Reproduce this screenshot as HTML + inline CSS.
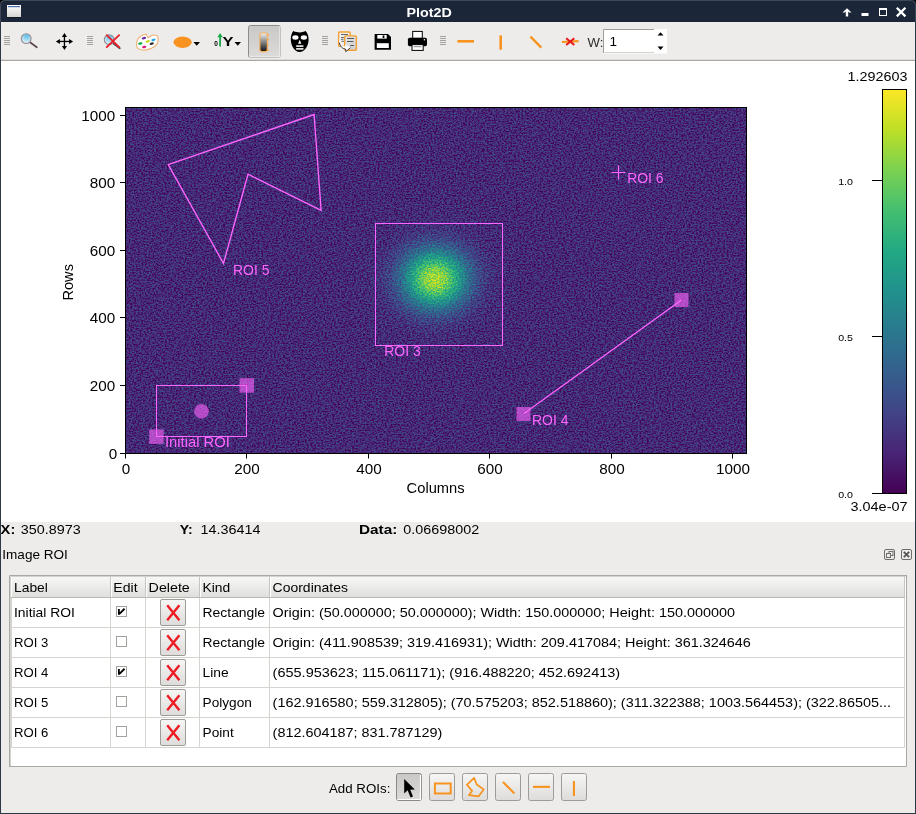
<!DOCTYPE html>
<html><head><meta charset="utf-8">
<style>
*{margin:0;padding:0;box-sizing:border-box}
html,body{width:916px;height:814px;overflow:hidden;background:#2a3444}
body{position:relative;font-family:"Liberation Sans",sans-serif;color:#000}
svg{position:absolute;left:0;top:0;will-change:transform}
text{font-family:"Liberation Sans",sans-serif}
</style></head><body>
<svg width="916" height="814" viewBox="0 0 916 814">
<defs>
<linearGradient id="btnPressed" x1="0" y1="0" x2="0" y2="1"><stop offset="0" stop-color="#c9c8c6"/><stop offset="1" stop-color="#dcdbd9"/></linearGradient>
<linearGradient id="btnN" x1="0" y1="0" x2="0" y2="1"><stop offset="0" stop-color="#f6f6f5"/><stop offset="1" stop-color="#dddcda"/></linearGradient>
<linearGradient id="hdr" x1="0" y1="0" x2="0" y2="1"><stop offset="0" stop-color="#f7f7f6"/><stop offset="1" stop-color="#dfdfdc"/></linearGradient>
<linearGradient id="cbar" x1="0" y1="1" x2="0" y2="0">
<stop offset="0" stop-color="#440154"/><stop offset="0.1" stop-color="#482475"/><stop offset="0.2" stop-color="#414487"/><stop offset="0.3" stop-color="#355f8d"/><stop offset="0.4" stop-color="#2a788e"/><stop offset="0.5" stop-color="#21918c"/><stop offset="0.6" stop-color="#22a884"/><stop offset="0.7" stop-color="#44bf70"/><stop offset="0.8" stop-color="#7ad151"/><stop offset="0.9" stop-color="#bddf26"/><stop offset="1" stop-color="#fde725"/>
</linearGradient>
<linearGradient id="cmapIcon" x1="0" y1="0" x2="0" y2="1"><stop offset="0" stop-color="#ffffff"/><stop offset="1" stop-color="#1a1a1a"/></linearGradient>
</defs>

<!-- window frame -->
<rect x="0" y="0" width="916" height="814" fill="#000"/>
<path d="M0 5 Q0 0 5 0 H911 Q916 0 916 5 V814 H0 Z" fill="#3e4856"/>
<path d="M1 5.5 Q1 1 5.5 1 H910.5 Q915 1 915 5.5 V22 H1 Z" fill="#1b2638"/>
<rect x="1" y="22" width="914" height="791" fill="#edeceb"/>
<defs><linearGradient id="wico" x1="0" y1="0" x2="0" y2="1"><stop offset="0" stop-color="#ffffff"/><stop offset="1" stop-color="#d6d6d2"/></linearGradient></defs>
<rect x="7" y="5" width="14" height="12" fill="url(#wico)"/>
<rect x="7" y="17" width="14" height="1" fill="#101820"/>
<rect x="8" y="6" width="12" height="1.2" fill="#4a70b0"/>
<text x="406.50" y="17.00" font-size="12.72" textLength="45.20" lengthAdjust="spacingAndGlyphs" font-weight="bold" fill="#fff">Plot2D</text>

<path d="M842.5 12.6 L847 8.2 L851.5 12.6 L849.2 12.6 L848.2 11.6 V16.5 H845.8 V11.6 L844.8 12.6 Z" fill="#fff"/>
<rect x="861.5" y="13" width="7" height="3" fill="#fff"/>
<path d="M879 8 H887 V16 H879 Z M880 10 V15 H886 V10 Z" fill="#fff" fill-rule="evenodd"/>
<path d="M896.8 7.8 L905.4 16.4 M905.4 7.8 L896.8 16.4" stroke="#fff" stroke-width="2.3"/>
<!-- toolbar -->
<rect x="1" y="59" width="914" height="1" fill="#dcdbd7"/>
<rect x="1" y="60" width="914" height="1" fill="#a9a8a2"/>

<g id="handles" fill="#a3a29c">
<path d="M4 36h6v1h-6zM4 38h6v1h-6zM4 40h6v1h-6zM4 42h6v1h-6zM4 44h6v1h-6z"/>
<path d="M87 36h6v1h-6zM87 38h6v1h-6zM87 40h6v1h-6zM87 42h6v1h-6zM87 44h6v1h-6z"/>
<path d="M322 36h6v1h-6zM322 38h6v1h-6zM322 40h6v1h-6zM322 42h6v1h-6zM322 44h6v1h-6z"/>
<path d="M440 36h6v1h-6zM440 38h6v1h-6zM440 40h6v1h-6zM440 42h6v1h-6zM440 44h6v1h-6z"/>
</g>
<defs>
<radialGradient id="lens" cx="0.55" cy="0.2" r="0.85"><stop offset="0" stop-color="#58bde8"/><stop offset="1" stop-color="#f4f8fa"/></radialGradient>
</defs>
<!-- zoom -->
<line x1="30" y1="42.3" x2="36.8" y2="47.2" stroke="#5c4b53" stroke-width="1.8" stroke-linecap="round"/>
<circle cx="26.2" cy="38.6" r="4.9" fill="url(#lens)" stroke="#958a8e" stroke-width="1.1"/>
<!-- pan -->
<g fill="#000">
<rect x="58" y="40.8" width="13" height="1.3"/>
<rect x="63.8" y="35" width="1.3" height="13"/>
<path d="M55.9 41.45 L59.9 38.9 L59.9 44 Z M73.1 41.45 L69.1 38.9 L69.1 44 Z M64.45 32.9 L61.9 36.9 L67 36.9 Z M64.45 50 L61.9 46 L67 46 Z"/>
</g>
<!-- zoom reset -->
<line x1="113" y1="43.3" x2="119.8" y2="48.2" stroke="#5c4b53" stroke-width="1.8" stroke-linecap="round"/>
<circle cx="109.2" cy="39.6" r="4.9" fill="url(#lens)" stroke="#958a8e" stroke-width="1.1"/>
<path d="M106.2 34.6 L119.6 47.6 M119.6 34.6 L106.2 47.6" stroke="#e8202a" stroke-width="1.9"/>
<!-- palette -->
<path d="M148 37.5 C146 35.5 147 33.6 145 34.2 C139 35.5 135.5 41 136.6 46 C137.6 50.6 145 51 151 48.6 C157 46.2 159.5 40.5 157.6 36.6 C156.5 34.5 153 34.6 151 35.8 C149.6 36.6 149 38.3 148 37.5 Z" fill="#fff" stroke="#f0b070" stroke-width="1.1"/>
<g transform="translate(0,0)">
<ellipse cx="143.9" cy="38.2" rx="2.2" ry="1.2" fill="#6a2aa8" transform="rotate(-15 143.9 38.2)"/>
<ellipse cx="153.4" cy="39.8" rx="2.2" ry="1.2" fill="#20a8e8" transform="rotate(-15 153.4 39.8)"/>
<ellipse cx="147.8" cy="41.4" rx="2.2" ry="1.2" fill="#c8d820" transform="rotate(-15 147.8 41.4)"/>
<ellipse cx="140.3" cy="43.5" rx="2.2" ry="1.2" fill="#10a840" transform="rotate(-15 140.3 43.5)"/>
<ellipse cx="151.7" cy="43.7" rx="2.2" ry="1.2" fill="#303030" transform="rotate(-15 151.7 43.7)"/>
<ellipse cx="144.2" cy="47" rx="2.2" ry="1.2" fill="#e81878" transform="rotate(-15 144.2 47)"/>
</g>
<!-- orange ellipse + arrow -->
<ellipse cx="182.6" cy="42.3" rx="9.1" ry="5.7" fill="#f7931e"/>
<path d="M193.5 42 H200 L196.75 45.8 Z" fill="#000"/>
<!-- Y axis -->
<text x="214.3" y="46" font-size="6.5" font-weight="bold" fill="#000">0</text>
<rect x="219.2" y="36" width="1.8" height="10.5" fill="#1aa84a"/>
<path d="M220.1 33 L217.4 37.2 L222.8 37.2 Z" fill="#1aa84a"/>
<text x="222.4" y="46.3" font-size="12.6" font-weight="bold" fill="#000" textLength="11" lengthAdjust="spacingAndGlyphs">Y</text>
<path d="M234.5 42 H241 L237.75 45.8 Z" fill="#000"/>
<!-- pressed button -->
<rect x="248.5" y="25.5" width="32" height="32" rx="2" fill="url(#btnPressed)" stroke="#8f8d89" stroke-width="1"/>
<path d="M249.5 57 H280 V26" stroke="#f6f6f4" stroke-width="1" fill="none"/>
<defs><linearGradient id="cmi" x1="0" y1="0" x2="0" y2="1"><stop offset="0" stop-color="#f2f2f2"/><stop offset="1" stop-color="#101010"/></linearGradient></defs>
<g fill="#f5a848"><rect x="266.5" y="34.2" width="2.6" height="1.2"/><rect x="266.5" y="39" width="2.6" height="1.2"/><rect x="266.5" y="44.5" width="2.6" height="1.2"/><rect x="266.5" y="49.8" width="2.6" height="1.2"/></g>
<rect x="259.9" y="33" width="7.4" height="18.6" rx="2" fill="url(#cmi)" stroke="#f5ad55" stroke-width="1.1"/>
<!-- mask -->
<path d="M293.3 31 C295.5 32 297.5 32.4 299.7 32.4 C301.9 32.4 303.9 32 305.6 31.1 C307.6 33 308.7 36.5 308.6 40 C308.4 46 304.6 51.9 299.7 51.9 C294.8 51.9 291 46 290.8 40 C290.7 36.5 291.5 33 293.3 31 Z" fill="#000"/>
<ellipse cx="295.4" cy="37.5" rx="3.1" ry="2.2" fill="#fff"/>
<ellipse cx="303.9" cy="37.5" rx="3.1" ry="2.2" fill="#fff"/>
<path d="M299.7 39.7 L298.1 43.8 H301.3 Z" fill="#fff"/>
<rect x="295.9" y="45.2" width="7.8" height="1.7" rx="0.8" fill="#e0e0e0"/>
<rect x="295.9" y="48" width="7.8" height="1.7" rx="0.8" fill="#e0e0e0"/>
<!-- copy -->
<defs><linearGradient id="doc2" x1="0" y1="0" x2="1" y2="1"><stop offset="0" stop-color="#e6e6e6"/><stop offset="1" stop-color="#cfcfcf"/></linearGradient></defs>
<rect x="338.6" y="32" width="11.6" height="14.3" rx="1" fill="#f0f0f0" stroke="#f5a030" stroke-width="1.4"/>
<g fill="#666"><rect x="341" y="34" width="7" height="1"/><rect x="341" y="37" width="3.5" height="1"/><rect x="341" y="38.8" width="2.5" height="1"/><rect x="341.5" y="40.8" width="2.5" height="1"/></g>
<rect x="344.7" y="35.9" width="11.7" height="14.3" rx="1" fill="url(#doc2)" stroke="#f5a030" stroke-width="1.4"/>
<g fill="#555"><rect x="347" y="38" width="7" height="1"/><rect x="347" y="41" width="6.3" height="1"/><rect x="350.2" y="45" width="3.8" height="1"/></g>
<path d="M338.9 37 C339.2 43 341.5 46.2 345.4 46.6 L345.2 44.6 L350.8 47.4 L345.8 51.6 L345.6 49.2 C341.2 48.7 338.6 45.2 338.9 37 Z" fill="#fff"/>
<path d="M339.2 42.5 C340 46.2 342 48.6 345.6 49.2 L345.8 51.6 L350.6 47.6" fill="none" stroke="#111" stroke-width="0.8"/>
<!-- save -->
<path d="M374.6 34 H388 L391 37 V49.8 H374.6 Z" fill="#000"/>
<rect x="377.3" y="35" width="9.4" height="3.6" fill="#fff"/>
<rect x="382.6" y="35.4" width="1.8" height="2.6" fill="#000"/>
<rect x="376.8" y="43.2" width="12" height="4.8" fill="#fff"/>
<!-- print -->
<rect x="412.7" y="31.4" width="9.6" height="7" fill="#fff" stroke="#000" stroke-width="1"/>
<rect x="407.9" y="37.8" width="19.1" height="8.4" rx="1.8" fill="#000"/>
<circle cx="424.4" cy="39.8" r="0.8" fill="#fff"/>
<rect x="412" y="44.6" width="11.2" height="5.8" fill="#fff" stroke="#000" stroke-width="1"/>
<rect x="413.6" y="46.2" width="8" height="1" fill="#888"/>
<!-- line icons -->
<rect x="457.4" y="40" width="16.6" height="2.6" fill="#f7931e"/>
<rect x="499.4" y="35.4" width="2.6" height="14.3" fill="#f7931e"/>
<line x1="530.5" y1="36.6" x2="541.3" y2="47.6" stroke="#f7931e" stroke-width="2.3"/>
<line x1="562" y1="42" x2="578.6" y2="41.2" stroke="#f7931e" stroke-width="2.2"/>
<path d="M566.2 38.2 L574.3 45 M574.3 38.2 L566.2 45" stroke="#e81818" stroke-width="2"/>
<!-- W: spinbox -->
<text x="587.50" y="46.50" font-size="12.72" textLength="15.81" lengthAdjust="spacingAndGlyphs" fill="#2a2a2a">W:</text>

<rect x="603.5" y="29" width="63.5" height="24.5" fill="#fff"/>
<path d="M603.5 53 V29.5 H654" stroke="#9e9d98" stroke-width="1" fill="none"/>
<path d="M604.5 52.5 H654" stroke="#d4d3cf" stroke-width="1"/>
<text x="609.5" y="46.2" font-size="13.5" fill="#000">1</text>
<path d="M657.5 35.6 H663.5 L660.5 32.2 Z M657.5 46.6 H663.5 L660.5 50 Z" fill="#000"/>


<!-- PLOT -->
<rect x="1" y="61" width="914" height="461" fill="#fff"/>
<defs>
<radialGradient id="gauss" gradientUnits="userSpaceOnUse" cx="0" cy="0" r="80" gradientTransform="translate(435 279) scale(1.1 1)">
<stop offset="0" stop-color="#fff"/><stop offset="0.125" stop-color="#e1e1e1"/><stop offset="0.25" stop-color="#9b9b9b"/><stop offset="0.375" stop-color="#535353"/><stop offset="0.5" stop-color="#232323"/><stop offset="0.625" stop-color="#0b0b0b"/><stop offset="0.75" stop-color="#030303"/><stop offset="1" stop-color="#000"/>
</radialGradient>
<filter id="cmap" x="126" y="108" width="620" height="345" filterUnits="userSpaceOnUse" color-interpolation-filters="sRGB">
<feTurbulence type="fractalNoise" baseFrequency="0.55 0.7" numOctaves="2" seed="5" result="t"/>
<feColorMatrix in="t" type="matrix" values="2.5 0 0 0 -0.75  2.5 0 0 0 -0.75  2.5 0 0 0 -0.75  0 0 0 0 1" result="n"/>
<feComposite in="SourceGraphic" in2="n" operator="arithmetic" k1="0" k2="0.774" k3="0.232" k4="0" result="v"/>
<feColorMatrix in="v" type="matrix" values="1 0 0 0 0  0 1 0 0 0  0 0 1 0 0  0 0 0 0 1" result="v2"/>
<feComponentTransfer in="v2">
<feFuncR type="table" tableValues="0.267 0.282 0.255 0.208 0.165 0.129 0.133 0.267 0.478 0.741 0.992"/>
<feFuncG type="table" tableValues="0.004 0.141 0.267 0.373 0.471 0.569 0.659 0.749 0.820 0.875 0.906"/>
<feFuncB type="table" tableValues="0.329 0.459 0.529 0.553 0.557 0.549 0.518 0.439 0.318 0.149 0.145"/>
</feComponentTransfer>
</filter>
</defs>
<rect x="126" y="108" width="620" height="345" fill="url(#gauss)" filter="url(#cmap)"/>
<rect x="125.5" y="107.5" width="621" height="346" fill="none" stroke="#000" stroke-width="1"/>
<!-- ticks -->
<g stroke="#000" stroke-width="1">
<path d="M120 453.5H125M120 385.5H125M120 317.5H125M120 250.5H125M120 182.5H125M120 115.5H125"/>
<path d="M125.5 454V458.5M246.5 454V458.5M368.5 454V458.5M489.5 454V458.5M611.5 454V458.5M732.5 454V458.5"/>
</g>
<text x="108.82" y="458.50" font-size="14.13" textLength="8.48" lengthAdjust="spacingAndGlyphs">0</text>
<text x="89.85" y="390.50" font-size="14.13" textLength="25.45" lengthAdjust="spacingAndGlyphs">200</text>
<text x="89.85" y="323.00" font-size="14.13" textLength="25.45" lengthAdjust="spacingAndGlyphs">400</text>
<text x="89.85" y="255.50" font-size="14.13" textLength="25.45" lengthAdjust="spacingAndGlyphs">600</text>
<text x="89.85" y="187.50" font-size="14.13" textLength="25.45" lengthAdjust="spacingAndGlyphs">800</text>
<text x="81.36" y="120.50" font-size="14.13" textLength="33.94" lengthAdjust="spacingAndGlyphs">1000</text>
<text x="121.76" y="474.00" font-size="14.13" textLength="8.48" lengthAdjust="spacingAndGlyphs">0</text>
<text x="234.27" y="474.00" font-size="14.13" textLength="25.45" lengthAdjust="spacingAndGlyphs">200</text>
<text x="356.27" y="474.00" font-size="14.13" textLength="25.45" lengthAdjust="spacingAndGlyphs">400</text>
<text x="477.27" y="474.00" font-size="14.13" textLength="25.45" lengthAdjust="spacingAndGlyphs">600</text>
<text x="599.27" y="474.00" font-size="14.13" textLength="25.45" lengthAdjust="spacingAndGlyphs">800</text>
<text x="716.03" y="474.00" font-size="14.13" textLength="33.94" lengthAdjust="spacingAndGlyphs">1000</text>
<text x="406.60" y="493.00" font-size="14.13" textLength="58.00" lengthAdjust="spacingAndGlyphs">Columns</text>
<text transform="translate(72.5 282.3) rotate(-90)" x="-18.20" y="0" font-size="14.13" textLength="36.41" lengthAdjust="spacingAndGlyphs">Rows</text>

<!-- colorbar -->
<rect x="882.5" y="89.5" width="24" height="404" fill="url(#cbar)" stroke="#000" stroke-width="1"/>
<path d="M872 493.5H882M872 336.5H882M872 180.5H882" stroke="#000" stroke-width="1"/>
<text x="838.16" y="498.00" font-size="9.89" textLength="14.84" lengthAdjust="spacingAndGlyphs">0.0</text>
<text x="838.16" y="341.00" font-size="9.89" textLength="14.84" lengthAdjust="spacingAndGlyphs">0.5</text>
<text x="838.16" y="185.00" font-size="9.89" textLength="14.84" lengthAdjust="spacingAndGlyphs">1.0</text>
<text x="847.62" y="81.00" font-size="12.72" textLength="59.88" lengthAdjust="spacingAndGlyphs">1.292603</text>
<text x="850.54" y="511.30" font-size="12.72" textLength="56.96" lengthAdjust="spacingAndGlyphs">3.04e-07</text>

<!-- ROIs -->
<g stroke="#ff66ff" stroke-width="1" fill="none">
<path d="M223.5 263.4 L168.2 164.7 L314.1 114.5 L321.1 210.4 L248 174.2 Z" stroke-width="1.35"/>
<rect x="375.5" y="223.5" width="127" height="122"/>
<rect x="156.5" y="385.5" width="90" height="51"/>
<path d="M523.7 413.8 L681.5 300" stroke-width="1.35"/>
<path d="M611.5 172.5 H625.5 M618.5 165.5 V179.5" stroke-width="1.2"/>
</g>
<g fill="#ff66ff" fill-opacity="0.6">
<rect x="516.5" y="407" width="14" height="14"/>
<rect x="674.5" y="293" width="14" height="14"/>
<rect x="149.2" y="429.4" width="14.5" height="14.5"/>
<rect x="239.5" y="378.2" width="14.5" height="14.5"/>
<circle cx="201.5" cy="411.4" r="7.3"/>
</g>
<text x="233.00" y="275.00" font-size="14.13" textLength="36.41" lengthAdjust="spacingAndGlyphs" fill="#ff66ff">ROI 5</text>
<text x="384.30" y="356.00" font-size="14.13" textLength="36.41" lengthAdjust="spacingAndGlyphs" fill="#ff66ff">ROI 3</text>
<text x="532.00" y="425.00" font-size="14.13" textLength="36.41" lengthAdjust="spacingAndGlyphs" fill="#ff66ff">ROI 4</text>
<text x="627.20" y="182.80" font-size="14.13" textLength="36.41" lengthAdjust="spacingAndGlyphs" fill="#ff66ff">ROI 6</text>
<text x="165.00" y="447.30" font-size="14.13" textLength="64.81" lengthAdjust="spacingAndGlyphs" fill="#ff66ff">Initial ROI</text>




<!-- BOTTOM -->
<text x="0.60" y="534.00" font-size="12.72" textLength="14.68" lengthAdjust="spacingAndGlyphs" font-weight="bold">X:</text>
<text x="20.80" y="534.00" font-size="12.72" textLength="59.88" lengthAdjust="spacingAndGlyphs">350.8973</text>
<text x="179.80" y="534.00" font-size="12.72" textLength="13.00" lengthAdjust="spacingAndGlyphs" font-weight="bold">Y:</text>
<text x="200.60" y="534.00" font-size="12.72" textLength="59.88" lengthAdjust="spacingAndGlyphs">14.36414</text>
<text x="359.00" y="534.00" font-size="12.72" textLength="38.34" lengthAdjust="spacingAndGlyphs" font-weight="bold">Data:</text>
<text x="403.30" y="534.00" font-size="12.72" textLength="75.84" lengthAdjust="spacingAndGlyphs">0.06698002</text>
<text x="2.30" y="559.00" font-size="12.72" textLength="65.59" lengthAdjust="spacingAndGlyphs">Image ROI</text>
<rect x="884.5" y="549.5" width="10" height="10" rx="1.5" fill="none" stroke="#6e6d69" stroke-width="1"/>
<rect x="889" y="551.5" width="4" height="4" fill="none" stroke="#6e6d69" stroke-width="1"/>
<rect x="886.5" y="553.5" width="4" height="4" fill="#edeceb" stroke="#6e6d69" stroke-width="1"/>
<rect x="901.5" y="549.5" width="10" height="10" rx="1.5" fill="none" stroke="#6e6d69" stroke-width="1"/>
<path d="M903.8 551.8 L909.2 557.2 M909.2 551.8 L903.8 557.2" stroke="#555" stroke-width="1.8"/>
<rect x="9" y="575" width="898" height="192" fill="#fff"/>
<path d="M9.5 767 V575.5 H907" stroke="#a9a8a2" stroke-width="1" fill="none"/>
<path d="M906.5 575 V766.5 H9" stroke="#a9a8a2" stroke-width="1" fill="none"/>
<path d="M10.5 766 V576.5 H906" stroke="#d3d2cd" stroke-width="1" fill="none"/>
<rect x="11" y="577" width="894" height="20" fill="url(#hdr)"/>
<rect x="11" y="597" width="894" height="1" fill="#b9b8b3"/>
<g fill="#c5c4bf"><rect x="110" y="577" width="1" height="20"/><rect x="145" y="577" width="1" height="20"/><rect x="199" y="577" width="1" height="20"/><rect x="269" y="577" width="1" height="20"/><rect x="904" y="577" width="1" height="20"/></g>
<g fill="#fff"><rect x="11" y="577" width="1" height="20"/><rect x="111" y="577" width="1" height="20"/><rect x="146" y="577" width="1" height="20"/><rect x="200" y="577" width="1" height="20"/><rect x="270" y="577" width="1" height="20"/></g>
<g fill="#d5d4cf">
<rect x="11" y="598" width="1" height="150"/><rect x="110" y="598" width="1" height="150"/><rect x="145" y="598" width="1" height="150"/><rect x="199" y="598" width="1" height="150"/><rect x="269" y="598" width="1" height="150"/><rect x="904" y="598" width="1" height="150"/>
<rect x="11" y="627" width="894" height="1"/><rect x="11" y="657" width="894" height="1"/><rect x="11" y="687" width="894" height="1"/><rect x="11" y="717" width="894" height="1"/><rect x="11" y="747" width="894" height="1"/>
</g>
<text x="14.00" y="592.00" font-size="12.72" textLength="33.85" lengthAdjust="spacingAndGlyphs">Label</text>
<text x="113.30" y="592.00" font-size="12.72" textLength="24.28" lengthAdjust="spacingAndGlyphs">Edit</text>
<text x="148.60" y="592.00" font-size="12.72" textLength="41.21" lengthAdjust="spacingAndGlyphs">Delete</text>
<text x="202.60" y="592.00" font-size="12.72" textLength="27.63" lengthAdjust="spacingAndGlyphs">Kind</text>
<text x="272.60" y="592.00" font-size="12.72" textLength="75.31" lengthAdjust="spacingAndGlyphs">Coordinates</text>
<text x="14.00" y="617.00" font-size="12.72" textLength="60.99" lengthAdjust="spacingAndGlyphs">Initial ROI</text>
<text x="202.60" y="617.00" font-size="12.72" textLength="62.50" lengthAdjust="spacingAndGlyphs">Rectangle</text>
<text x="272.60" y="617.00" font-size="12.72" textLength="462.30" lengthAdjust="spacingAndGlyphs">Origin: (50.000000; 50.000000); Width: 150.000000; Height: 150.000000</text>
<rect x="116.5" y="606.5" width="10" height="10" fill="#fff" stroke="#a3a29c" stroke-width="1"/>
<path d="M118 609 H119.8 V612.2 L123.9 608.1 L125.2 609.4 L119.8 614.8 H118 Z" fill="#000"/>
<rect x="160.5" y="599.5" width="25" height="26" rx="1.5" fill="url(#btnN)" stroke="#9d9c97" stroke-width="1"/>
<path d="M167.2 605.2 L179.4 620.2 M179.4 605.2 L167.2 620.2" stroke="#ec1c24" stroke-width="2.4"/>
<text x="14.00" y="647.00" font-size="12.72" textLength="34.27" lengthAdjust="spacingAndGlyphs">ROI 3</text>
<text x="202.60" y="647.00" font-size="12.72" textLength="62.50" lengthAdjust="spacingAndGlyphs">Rectangle</text>
<text x="272.60" y="647.00" font-size="12.72" textLength="478.27" lengthAdjust="spacingAndGlyphs">Origin: (411.908539; 319.416931); Width: 209.417084; Height: 361.324646</text>
<rect x="116.5" y="636.5" width="10" height="10" fill="#fff" stroke="#a3a29c" stroke-width="1"/>
<rect x="160.5" y="629.5" width="25" height="26" rx="1.5" fill="url(#btnN)" stroke="#9d9c97" stroke-width="1"/>
<path d="M167.2 635.2 L179.4 650.2 M179.4 635.2 L167.2 650.2" stroke="#ec1c24" stroke-width="2.4"/>
<text x="14.00" y="677.00" font-size="12.72" textLength="34.27" lengthAdjust="spacingAndGlyphs">ROI 4</text>
<text x="202.60" y="677.00" font-size="12.72" textLength="26.14" lengthAdjust="spacingAndGlyphs">Line</text>
<text x="272.60" y="677.00" font-size="12.72" textLength="347.61" lengthAdjust="spacingAndGlyphs">(655.953623; 115.061171); (916.488220; 452.692413)</text>
<rect x="116.5" y="666.5" width="10" height="10" fill="#fff" stroke="#a3a29c" stroke-width="1"/>
<path d="M118 669 H119.8 V672.2 L123.9 668.1 L125.2 669.4 L119.8 674.8 H118 Z" fill="#000"/>
<rect x="160.5" y="659.5" width="25" height="26" rx="1.5" fill="url(#btnN)" stroke="#9d9c97" stroke-width="1"/>
<path d="M167.2 665.2 L179.4 680.2 M179.4 665.2 L167.2 680.2" stroke="#ec1c24" stroke-width="2.4"/>
<text x="14.00" y="707.00" font-size="12.72" textLength="34.27" lengthAdjust="spacingAndGlyphs">ROI 5</text>
<text x="202.60" y="707.00" font-size="12.72" textLength="49.29" lengthAdjust="spacingAndGlyphs">Polygon</text>
<text x="272.60" y="707.00" font-size="12.72" textLength="618.44" lengthAdjust="spacingAndGlyphs">(162.916580; 559.312805); (70.575203; 852.518860); (311.322388; 1003.564453); (322.86505...</text>
<rect x="116.5" y="696.5" width="10" height="10" fill="#fff" stroke="#a3a29c" stroke-width="1"/>
<rect x="160.5" y="689.5" width="25" height="26" rx="1.5" fill="url(#btnN)" stroke="#9d9c97" stroke-width="1"/>
<path d="M167.2 695.2 L179.4 710.2 M179.4 695.2 L167.2 710.2" stroke="#ec1c24" stroke-width="2.4"/>
<text x="14.00" y="737.00" font-size="12.72" textLength="34.27" lengthAdjust="spacingAndGlyphs">ROI 6</text>
<text x="202.60" y="737.00" font-size="12.72" textLength="31.14" lengthAdjust="spacingAndGlyphs">Point</text>
<text x="272.60" y="737.00" font-size="12.72" textLength="169.70" lengthAdjust="spacingAndGlyphs">(812.604187; 831.787129)</text>
<rect x="116.5" y="726.5" width="10" height="10" fill="#fff" stroke="#a3a29c" stroke-width="1"/>
<rect x="160.5" y="719.5" width="25" height="26" rx="1.5" fill="url(#btnN)" stroke="#9d9c97" stroke-width="1"/>
<path d="M167.2 725.2 L179.4 740.2 M179.4 725.2 L167.2 740.2" stroke="#ec1c24" stroke-width="2.4"/>
<text x="329.00" y="792.50" font-size="12.72" textLength="61.34" lengthAdjust="spacingAndGlyphs">Add ROIs:</text>
<rect x="396.5" y="773.5" width="25" height="27" rx="2" fill="url(#btnPressed)" stroke="#8c8884" stroke-width="1"/>
<rect x="429.5" y="773.5" width="25" height="27" rx="2" fill="url(#btnN)" stroke="#9d9c97" stroke-width="1"/>
<rect x="462.5" y="773.5" width="25" height="27" rx="2" fill="url(#btnN)" stroke="#9d9c97" stroke-width="1"/>
<rect x="495.5" y="773.5" width="25" height="27" rx="2" fill="url(#btnN)" stroke="#9d9c97" stroke-width="1"/>
<rect x="528.5" y="773.5" width="25" height="27" rx="2" fill="url(#btnN)" stroke="#9d9c97" stroke-width="1"/>
<rect x="561.5" y="773.5" width="25" height="27" rx="2" fill="url(#btnN)" stroke="#9d9c97" stroke-width="1"/>
<path d="M397.5 799.5 H420.5 V775" stroke="#fff" stroke-width="1.2" fill="none"/>
<path d="M404.2 779 V793.6 L407.6 790.3 L410.6 797.5 L413 796.4 L410.2 789.7 L414.8 789.6 Z" fill="#000"/>
<rect x="434.9" y="783.5" width="15.8" height="10" fill="none" stroke="#f7931e" stroke-width="2"/>
<path d="M474.1 777.8 L466.9 784.8 L472.1 790.9 L468.8 795.2 L478.7 796.3 L483.7 789.4 L476.7 784.5 Z" fill="none" stroke="#f7931e" stroke-width="1.7" stroke-linejoin="round"/>
<line x1="502.9" y1="782" x2="514.4" y2="793.5" stroke="#f7931e" stroke-width="2.1"/>
<rect x="533" y="785.8" width="17" height="2.1" fill="#f7931e"/>
<rect x="572.9" y="781" width="2.1" height="15" fill="#f7931e"/>
<rect x="0" y="22" width="1" height="792" fill="#2e3846"/><rect x="915" y="22" width="1" height="792" fill="#2e3846"/><rect x="0" y="813" width="916" height="1" fill="#2e3846"/>
</svg>
</body></html>
